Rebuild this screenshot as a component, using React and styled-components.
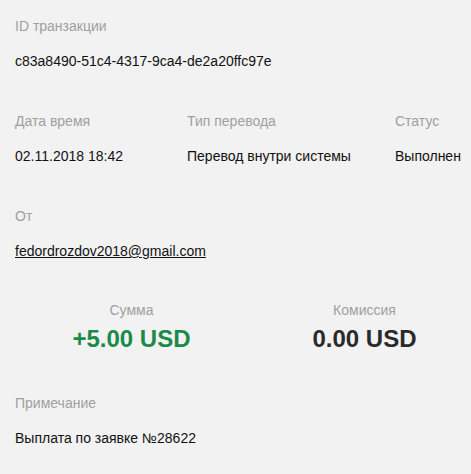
import React from "react";
import styled, { createGlobalStyle } from "styled-components";

const GlobalStyle = createGlobalStyle`
  html, body {
    margin: 0;
    background: #f2f2f2;
    font-family: Arial, "Liberation Sans", sans-serif;
  }
`;

const Page = styled.div`
  width: 471px;
  height: 474px;
  overflow: hidden;
  padding: 17px 0 0 15px;
  box-sizing: border-box;
`;

const Section = styled.div`
  margin-bottom: ${(p) => p.$gap || 42}px;
`;

const Row = styled.div`
  display: grid;
  grid-template-columns: ${(p) => p.$cols};
  white-space: nowrap;
`;

const Field = styled.div`
  text-align: ${(p) => (p.$center ? "center" : "left")};
`;

const Label = styled.div`
  font-size: 14px;
  line-height: 18px;
  color: #a0a0a0;
  margin-bottom: ${(p) => p.$gap || 17}px;
`;

const Value = styled.div`
  font-size: 14px;
  line-height: 18px;
  color: #111;
`;

const Email = styled.a`
  color: #111;
  text-decoration: underline;
  font-size: 14px;
  line-height: 18px;
`;

const Amount = styled.div`
  font-size: 24px;
  line-height: 28px;
  font-weight: bold;
  color: ${(p) => (p.$positive ? "#1a8a4a" : "#2a2a2a")};
`;

export default function App() {
  return (
    <>
      <GlobalStyle />
      <Page>
        <Section>
          <Label>ID транзакции</Label>
          <Value>c83a8490-51c4-4317-9ca4-de2a20ffc97e</Value>
        </Section>
        <Section>
          <Row $cols="172px 208px 100px">
            <Field>
              <Label>Дата время</Label>
              <Value>02.11.2018 18:42</Value>
            </Field>
            <Field>
              <Label>Тип перевода</Label>
              <Value>Перевод внутри системы</Value>
            </Field>
            <Field>
              <Label>Статус</Label>
              <Value>Выполнен</Value>
            </Field>
          </Row>
        </Section>
        <Section $gap={41}>
          <Label>От</Label>
          <Email href="#">fedordrozdov2018@gmail.com</Email>
        </Section>
        <Section $gap={41}>
          <Row $cols="233px 233px">
            <Field $center>
              <Label $gap={6}>Сумма</Label>
              <Amount $positive>+5.00 USD</Amount>
            </Field>
            <Field $center>
              <Label $gap={6}>Комиссия</Label>
              <Amount>0.00 USD</Amount>
            </Field>
          </Row>
        </Section>
        <Section>
          <Label>Примечание</Label>
          <Value>Выплата по заявке №28622</Value>
        </Section>
      </Page>
    </>
  );
}
